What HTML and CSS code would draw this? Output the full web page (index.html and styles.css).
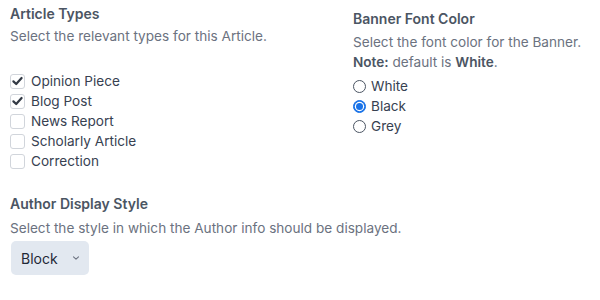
FILE: index.html
```html
<!DOCTYPE html>
<html>
<head>
<meta charset="utf-8">
<link rel="stylesheet" href="styles.css">
</head>
<body>
<div class="page">
  <div class="row">
    <div class="field left">
      <div class="title">Article Types</div>
      <div class="desc">Select the relevant types for this Article.</div>
      <div class="options checks">
        <label class="opt"><span class="cb on"><svg viewBox="0 0 14 14" width="14" height="14"><path d="M2.6 7.4 L5.6 10.2 L11.4 3.8" fill="none" stroke="#333a45" stroke-width="2.4" stroke-linecap="round" stroke-linejoin="round"/></svg></span>Opinion Piece</label>
        <label class="opt"><span class="cb on"><svg viewBox="0 0 14 14" width="14" height="14"><path d="M2.6 7.4 L5.6 10.2 L11.4 3.8" fill="none" stroke="#333a45" stroke-width="2.4" stroke-linecap="round" stroke-linejoin="round"/></svg></span>Blog Post</label>
        <label class="opt"><span class="cb"></span>News Report</label>
        <label class="opt"><span class="cb"></span>Scholarly Article</label>
        <label class="opt"><span class="cb"></span>Correction</label>
      </div>
    </div>
    <div class="field right">
      <div class="title">Banner Font Color</div>
      <div class="desc">Select the font color for the Banner.<br><b>Note:</b> default is <b>White</b>.</div>
      <div class="options radios">
        <label class="opt"><span class="rd"></span>White</label>
        <label class="opt"><span class="rd on"></span>Black</label>
        <label class="opt"><span class="rd"></span>Grey</label>
      </div>
    </div>
  </div>
  <div class="field author">
    <div class="title">Author Display Style</div>
    <div class="desc">Select the style in which the Author info should be displayed.</div>
    <div class="select"><span>Block</span><svg width="8" height="6" viewBox="0 0 8 6"><path d="M1.5 1.8 L4 4.2 L6.5 1.8" fill="none" stroke="#6b7280" stroke-width="1.1" stroke-linecap="round" stroke-linejoin="round"/></svg></div>
  </div>
</div>
</body>
</html>
```
FILE: styles.css
```css
html, body { margin: 0; padding: 0; background: #fff; }
body { font-family: Inter, "Noto Sans", sans-serif; font-size: 13.6px; color: #374151; }
.page { padding: 4px 10px 0 10px; }
.row { display: flex; }
.left { width: 343px; }
.right { padding-top: 5px; }
.title { font-weight: 600; color: #4b5563; line-height: 20px; font-size: 14px; }
.desc { color: #6b7280; line-height: 20px; margin-top: 3px; }
.left .desc { margin-top: 2px; }
.desc b { font-weight: 600; color: #4b5563; }
.checks { margin-top: 25px; }
.radios { margin-top: 4px; }
.opt { display: flex; align-items: center; line-height: 20px; height: 20px; color: #374151; }
.cb { width: 13px; height: 13px; border: 1px solid #d1d5db; border-radius: 3px; margin-right: 6px; display: inline-flex; align-items: center; justify-content: center; background: #fff; }
.cb svg { display: block; }
.rd { width: 11px; height: 11px; border: 1px solid #4b5563; border-radius: 50%; margin-right: 5px; box-sizing: content-box; background: #fff; position: relative; }
.rd.on { border-color: #1a73e8; background: #1a73e8; }
.rd.on::after { content: ""; position: absolute; left: 2px; top: 2px; width: 7px; height: 7px; border-radius: 50%; background: #1a73e8; box-shadow: 0 0 0 1.2px #fff; }
.author { margin-top: 23px; }
.author .desc { margin-top: 4px; }
.select { margin-top: 3px; margin-left: 1px; width: 78px; height: 34px; box-sizing: border-box; background: #e2e8f0; border-radius: 5px; display: flex; align-items: center; justify-content: space-between; padding: 0 9px 0 10px; color: #1f2937; font-size: 14px; }
```
